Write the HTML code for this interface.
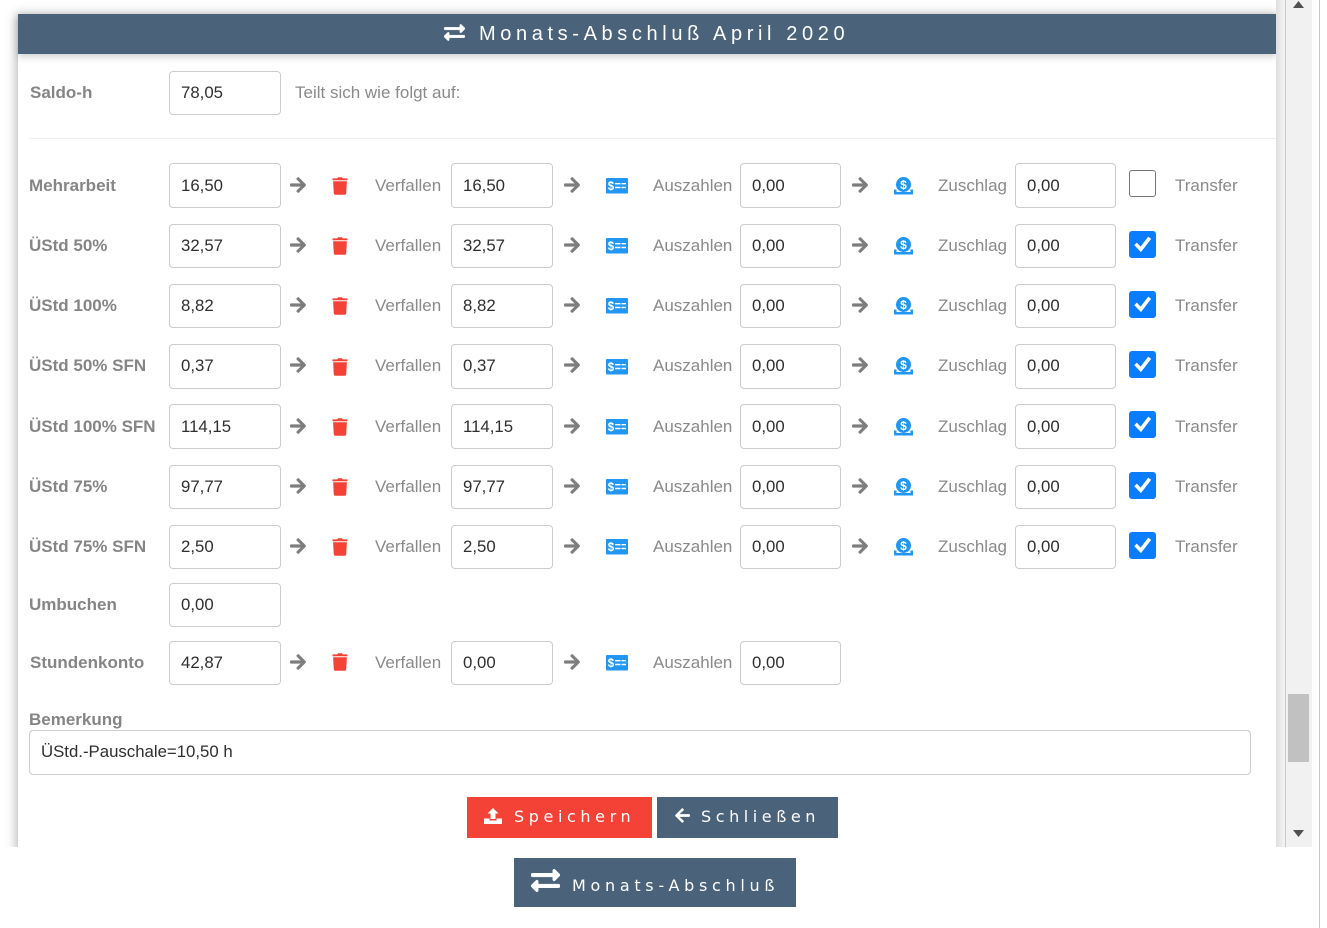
<!DOCTYPE html>
<html lang="de"><head><meta charset="utf-8"><title>Monats-Abschluß</title>
<style>
html,body{margin:0;padding:0;background:#fff;width:1327px;height:928px;overflow:hidden;font-family:"Liberation Sans",Arial,sans-serif;font-size:16px}
#v{position:absolute;left:0;top:0;width:1286px;height:847px;overflow:hidden;background:#fff}
#card{position:absolute;left:18px;top:14px;width:1258px;height:900px;background:#fff;box-shadow:0 2px 10px 2px rgba(0,0,0,.28)}
#hd{position:absolute;left:18px;top:14px;width:1258px;height:40px;background:#4b627b;box-shadow:0 3px 7px rgba(0,0,0,.18)}
#hd span{position:absolute;left:461px;top:8px;color:#fff;font-size:20px;line-height:24px;letter-spacing:4.62px;white-space:nowrap;font-family:"Liberation Sans",sans-serif}
#hd svg{position:absolute;left:426px;top:8px}
.r{position:absolute;left:0;width:1286px;height:45px}
.i{position:absolute;top:0;height:42px;border:1px solid #ccc;border-radius:4px;background:#fff;color:#2f2f2f;font-size:16.800px;line-height:41px;padding-left:11px;box-sizing:content-box}
.h .i{height:43px}
.hh .i{height:43px;line-height:43px}
.a{left:169px;width:99px}.b{left:451px;width:89px}.c{left:740px;width:88px}.d{left:1015px;width:88px}
.l{position:absolute;top:0;font-size:17px;line-height:46px;font-weight:bold;color:#858585;white-space:nowrap}
.t{position:absolute;top:0;font-size:17px;line-height:46px;color:#8a8a8a;white-space:nowrap}
.s .l,.s .t{line-height:44px}
.ar{position:absolute;top:13px;width:16px;height:18px}
.tr{position:absolute;left:332px;top:14px;width:16px;height:18px}
.mo{position:absolute;left:606px;top:15px;width:22px;height:16px}
.co{position:absolute;left:894px;top:14px;width:19px;height:18px}
.cb{position:absolute;left:1129px;top:7px;width:25px;height:25px;border:1px solid #767676;border-radius:3px;background:#fff}
.cb.on{background:#0a7cff;border-color:#0a7cff;top:8px}
.cb svg{position:absolute;left:3px;top:3px}
.btn{position:absolute;color:#fff;white-space:nowrap;font-family:"DejaVu Sans",sans-serif}
.btn span{position:absolute;white-space:nowrap}
.btn svg{position:absolute}
</style></head><body>
<svg width="0" height="0" style="position:absolute"><defs>
<symbol id="ar" viewBox="0 0 448 512"><path fill="#7d7d7d" stroke="#7d7d7d" stroke-width="14" d="M190.5 66.9l22.2-22.2c9.4-9.4 24.6-9.4 33.9 0L441 239c9.4 9.4 9.4 24.6 0 33.9L246.6 467.3c-9.4 9.4-24.6 9.4-33.9 0l-22.2-22.2c-9.5-9.5-9.3-25 .4-34.3L311.4 296H24c-13.3 0-24-10.7-24-24v-32c0-13.3 10.7-24 24-24h287.4L190.9 101.2c-9.800-9.300-10-24.800-.4-34.300z"/></symbol>
<symbol id="tr" viewBox="0 0 16 18"><path fill="#f44336" d="M.5 1.400h4.800L6 .2h4l.7 1.200h4.800V3.300H.5zM1.100 4.200h13.800l-.7 12.300a1.300 1.300 0 0 1-1.300 1.200H3.100a1.300 1.300 0 0 1-1.300-1.200z"/></symbol>
<symbol id="mo" viewBox="0 0 22 16"><rect x="0" y="0" width="22" height="15.500" rx="1" fill="#2196f3"/><text x="5" y="11.800" font-family="Liberation Sans,sans-serif" font-size="11.500" font-weight="bold" fill="#fff" text-anchor="middle">$</text><path fill="#fff" d="M9 5h5.500v1.400H9zM15.500 5H20v1.400h-4.500zM9 8.800h5.500v1.400H9zM15.500 8.800H20v1.400h-4.500z"/></symbol>
<symbol id="co" viewBox="0 0 19 18"><path fill="#2196f3" d="M0 12.500h2.500V15h14v-2.500H19V17a.5.5 0 0 1-.5.5H.5A.5.5 0 0 1 0 17z"/><circle cx="9.500" cy="7.500" r="7.500" fill="#2196f3"/><text x="9.500" y="11.800" font-family="Liberation Sans,sans-serif" font-size="12" font-weight="bold" fill="#fff" text-anchor="middle">$</text></symbol>
<symbol id="ck" viewBox="0 0 19 19"><path fill="none" stroke="#fff" stroke-width="3.600" stroke-linecap="square" d="M3.800 10.200l4 4.200L15.600 4.200"/></symbol>
<symbol id="ex" viewBox="0 0 512 512"><path fill="#fff" stroke="#fff" stroke-width="8" d="M0 168v-16c0-13.255 10.745-24 24-24h360V80c0-21.367 25.899-32.042 40.971-16.971l80 80c9.372 9.373 9.372 24.569 0 33.941l-80 80C409.956 271.982 384 261.456 384 240v-48H24c-13.255 0-24-10.745-24-24zm488 152H128v-48c0-21.314-25.862-32.08-40.971-16.971l-80 80c-9.372 9.373-9.372 24.569 0 33.941l80 80C102.057 463.997 128 453.437 128 432v-48h360c13.255 0 24-10.745 24-24v-16c0-13.255-10.745-24-24-24z"/></symbol>
</defs></svg>

<div id="v">
<div id="card"></div>
<div id="hd"><svg width="21" height="21" viewBox="0 0 512 512"><use href="#ex"/></svg><span>Monats-Abschluß April 2020</span></div>

<div class="r s" style="top:71px"><div class="l" style="left:30px">Saldo-h</div><div class="i a">78,05</div><div class="t" style="left:295px">Teilt sich wie folgt auf:</div></div>
<div style="position:absolute;left:29px;top:138px;width:1247px;height:1px;background:#eee"></div>

<div class="r hh" style="top:163px"><div class="l" style="left:29px">Mehrarbeit</div><div class="i a">16,50</div><svg class="ar" style="left:290px"><use href="#ar"/></svg><svg class="tr"><use href="#tr"/></svg><div class="t" style="left:375px">Verfallen</div><div class="i b">16,50</div><svg class="ar" style="left:564px"><use href="#ar"/></svg><svg class="mo"><use href="#mo"/></svg><div class="t" style="left:653px">Auszahlen</div><div class="i c">0,00</div><svg class="ar" style="left:852px"><use href="#ar"/></svg><svg class="co"><use href="#co"/></svg><div class="t" style="left:938px">Zuschlag</div><div class="i d">0,00</div><div class="cb"></div><div class="t" style="left:1175px">Transfer</div></div>

<div class="r" style="top:223px"><div class="l" style="left:29px">ÜStd 50%</div><div class="i a" style="top:1px">32,57</div><svg class="ar" style="left:290px"><use href="#ar"/></svg><svg class="tr"><use href="#tr"/></svg><div class="t" style="left:375px">Verfallen</div><div class="i b" style="top:1px">32,57</div><svg class="ar" style="left:564px"><use href="#ar"/></svg><svg class="mo"><use href="#mo"/></svg><div class="t" style="left:653px">Auszahlen</div><div class="i c" style="top:1px">0,00</div><svg class="ar" style="left:852px"><use href="#ar"/></svg><svg class="co"><use href="#co"/></svg><div class="t" style="left:938px">Zuschlag</div><div class="i d" style="top:1px">0,00</div><div class="cb on"><svg width="19" height="19"><use href="#ck"/></svg></div><div class="t" style="left:1175px">Transfer</div></div>

<div class="r" style="top:283px"><div class="l" style="left:29px">ÜStd 100%</div><div class="i a" style="top:1px">8,82</div><svg class="ar" style="left:290px"><use href="#ar"/></svg><svg class="tr"><use href="#tr"/></svg><div class="t" style="left:375px">Verfallen</div><div class="i b" style="top:1px">8,82</div><svg class="ar" style="left:564px"><use href="#ar"/></svg><svg class="mo"><use href="#mo"/></svg><div class="t" style="left:653px">Auszahlen</div><div class="i c" style="top:1px">0,00</div><svg class="ar" style="left:852px"><use href="#ar"/></svg><svg class="co"><use href="#co"/></svg><div class="t" style="left:938px">Zuschlag</div><div class="i d" style="top:1px">0,00</div><div class="cb on"><svg width="19" height="19"><use href="#ck"/></svg></div><div class="t" style="left:1175px">Transfer</div></div>

<div class="r h" style="top:343px"><div class="l" style="left:29px">ÜStd 50% SFN</div><div class="i a" style="top:1px">0,37</div><svg class="ar" style="left:290px"><use href="#ar"/></svg><svg class="tr" style="top:15px"><use href="#tr"/></svg><div class="t" style="left:375px">Verfallen</div><div class="i b" style="top:1px">0,37</div><svg class="ar" style="left:564px"><use href="#ar"/></svg><svg class="mo" style="top:16px"><use href="#mo"/></svg><div class="t" style="left:653px">Auszahlen</div><div class="i c" style="top:1px">0,00</div><svg class="ar" style="left:852px"><use href="#ar"/></svg><svg class="co"><use href="#co"/></svg><div class="t" style="left:938px">Zuschlag</div><div class="i d" style="top:1px">0,00</div><div class="cb on"><svg width="19" height="19"><use href="#ck"/></svg></div><div class="t" style="left:1175px">Transfer</div></div>

<div class="r hh" style="top:404px"><div class="l" style="left:29px">ÜStd 100% SFN</div><div class="i a">114,15</div><svg class="ar" style="left:290px"><use href="#ar"/></svg><svg class="tr"><use href="#tr"/></svg><div class="t" style="left:375px">Verfallen</div><div class="i b">114,15</div><svg class="ar" style="left:564px"><use href="#ar"/></svg><svg class="mo"><use href="#mo"/></svg><div class="t" style="left:653px">Auszahlen</div><div class="i c">0,00</div><svg class="ar" style="left:852px"><use href="#ar"/></svg><svg class="co"><use href="#co"/></svg><div class="t" style="left:938px">Zuschlag</div><div class="i d">0,00</div><div class="cb on" style="top:7px"><svg width="19" height="19"><use href="#ck"/></svg></div><div class="t" style="left:1175px">Transfer</div></div>

<div class="r" style="top:464px"><div class="l" style="left:29px">ÜStd 75%</div><div class="i a" style="top:1px">97,77</div><svg class="ar" style="left:290px"><use href="#ar"/></svg><svg class="tr"><use href="#tr"/></svg><div class="t" style="left:375px">Verfallen</div><div class="i b" style="top:1px">97,77</div><svg class="ar" style="left:564px"><use href="#ar"/></svg><svg class="mo"><use href="#mo"/></svg><div class="t" style="left:653px">Auszahlen</div><div class="i c" style="top:1px">0,00</div><svg class="ar" style="left:852px"><use href="#ar"/></svg><svg class="co"><use href="#co"/></svg><div class="t" style="left:938px">Zuschlag</div><div class="i d" style="top:1px">0,00</div><div class="cb on"><svg width="19" height="19"><use href="#ck"/></svg></div><div class="t" style="left:1175px">Transfer</div></div>

<div class="r" style="top:524px"><div class="l" style="left:29px">ÜStd 75% SFN</div><div class="i a" style="top:1px">2,50</div><svg class="ar" style="left:290px"><use href="#ar"/></svg><svg class="tr"><use href="#tr"/></svg><div class="t" style="left:375px">Verfallen</div><div class="i b" style="top:1px">2,50</div><svg class="ar" style="left:564px"><use href="#ar"/></svg><svg class="mo"><use href="#mo"/></svg><div class="t" style="left:653px">Auszahlen</div><div class="i c" style="top:1px">0,00</div><svg class="ar" style="left:852px"><use href="#ar"/></svg><svg class="co"><use href="#co"/></svg><div class="t" style="left:938px">Zuschlag</div><div class="i d" style="top:1px">0,00</div><div class="cb on"><svg width="19" height="19"><use href="#ck"/></svg></div><div class="t" style="left:1175px">Transfer</div></div>

<div class="r s" style="top:583px"><div class="l" style="left:29px">Umbuchen</div><div class="i a">0,00</div></div>

<div class="r s" style="top:641px"><div class="l" style="left:30px">Stundenkonto</div><div class="i a">42,87</div><svg class="ar" style="left:290px;top:12px"><use href="#ar"/></svg><svg class="tr" style="top:12px"><use href="#tr"/></svg><div class="t" style="left:375px">Verfallen</div><div class="i b">0,00</div><svg class="ar" style="left:564px;top:12px"><use href="#ar"/></svg><svg class="mo" style="top:14px"><use href="#mo"/></svg><div class="t" style="left:653px">Auszahlen</div><div class="i c">0,00</div></div>

<div class="l" style="left:29px;top:709px;line-height:22px">Bemerkung</div>
<div class="i" style="left:29px;top:730px;width:1209px;height:43px">ÜStd.-Pauschale=10,50 h</div>

<div class="btn" style="left:467px;top:797px;width:185px;height:41px;background:#f44336">
<svg style="left:17px;top:11px" width="18" height="16" viewBox="0 0 18 16"><path fill="#fff" d="M9 0l5.500 5.500H11.500V11h-5V5.500H3.500zM0 10.500h5.500V12.500h7V10.500H18V16H0z"/></svg>
<span style="left:47px;top:10px;font-size:16px;line-height:20px;letter-spacing:4.600px">Speichern</span></div>
<div class="btn" style="left:657px;top:797px;width:181px;height:41px;background:#4b627b">
<svg style="left:18px;top:10px" width="15" height="17" viewBox="0 0 448 512"><path fill="#fff" d="M257.500 445.100l-22.200 22.200c-9.400 9.400-24.600 9.400-33.900 0L7 273c-9.400-9.400-9.400-24.600 0-33.900L201.400 44.700c9.400-9.400 24.600-9.400 33.900 0l22.200 22.200c9.500 9.500 9.300 25-.4 34.300L136.600 216H424c13.300 0 24 10.700 24 24v32c0 13.300-10.700 24-24 24H136.600l120.500 114.800c9.800 9.300 10 24.800.4 34.300z"/></svg>
<span style="left:44px;top:10px;font-size:16px;line-height:20px;letter-spacing:4.560px">Schließen</span></div>
</div>

<div style="position:absolute;left:1276px;top:0;width:10px;height:847px;background:linear-gradient(90deg,#dedede,#f0f0f0 70%,#f4f4f4)"></div>
<div style="position:absolute;left:1285px;top:0;width:1px;height:847px;background:#c8c8c8"></div>
<div style="position:absolute;left:1286px;top:0;width:26px;height:847px;background:#f1f1f1"></div>
<div style="position:absolute;left:1288px;top:694px;width:21px;height:68px;background:#c1c1c1"></div>
<svg style="position:absolute;left:1292px;top:0" width="14" height="8"><path fill="#505050" d="M1 8L6.500 1 12 8z"/></svg>
<svg style="position:absolute;left:1292px;top:830px" width="14" height="8"><path fill="#505050" d="M1 0h11L6.500 7z"/></svg>
<div style="position:absolute;left:1319px;top:0;width:1px;height:928px;background:#c8c8c8"></div>

<div class="btn" style="left:514px;top:858px;width:282px;height:49px;background:#4b627b">
<svg style="left:17px;top:8px" width="29" height="29" viewBox="0 0 512 512"><use href="#ex"/></svg>
<span style="left:58px;top:18px;font-size:16px;line-height:20px;letter-spacing:4.700px">Monats-Abschluß</span></div>
</body></html>
